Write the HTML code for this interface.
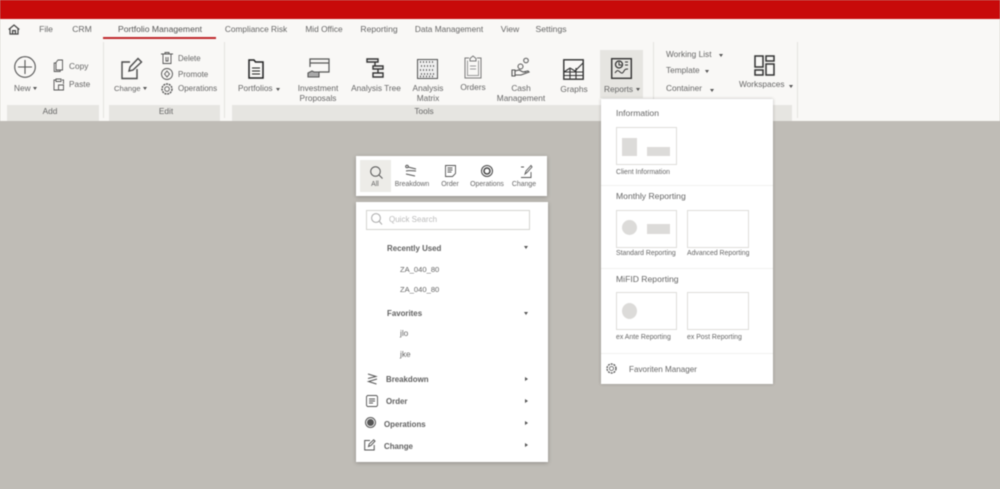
<!DOCTYPE html>
<html><head><meta charset="utf-8"><style>
html,body{margin:0;padding:0;width:1000px;height:489px;overflow:hidden;background:#bfbcb6}
#r{position:relative;width:1000px;height:489px;overflow:hidden;font-family:"Liberation Sans",sans-serif;color:#666;filter:blur(.45px)}
#r div,#r span.t{position:absolute}
.t{position:absolute;white-space:nowrap;font-size:8.3px;line-height:11px}
.n{font-size:8.6px}
.s{font-size:6.9px !important}
.c{transform:translateX(-50%);text-align:center}
.b{font-weight:bold;color:#606060;font-size:7.9px}
.tri{position:absolute;width:0;height:0;border-left:2.5px solid transparent;border-right:2.5px solid transparent;border-top:3px solid #555}
.trr{position:absolute;width:0;height:0;border-top:2.5px solid transparent;border-bottom:2.5px solid transparent;border-left:3px solid #555}
.tile{position:absolute;width:59px;height:36px;border:1px solid #dedddA;background:#fff}
.g{position:absolute;background:#dcdbd9}
svg{position:absolute;overflow:visible;fill:none;stroke:#555;stroke-width:1}
</style></head><body><div id="r">
<div style="left:0;top:0;width:1000px;height:19px;background:#c80a0a"></div>
<div style="left:0;top:19px;width:1000px;height:102px;background:#f9f8f6"></div>

<svg style="left:8px;top:24px" width="12" height="11"><path d="M.7 5.500 6 1l5.300 4.500M2 4.600V10h8V4.600M4.600 10V6.600h2.800V10" stroke="#444" stroke-width="1.200"/></svg>
<span class="t c n" style="left:46px;top:24px">File</span>
<span class="t c n" style="left:82px;top:24px">CRM</span>
<span class="t c n" style="left:160px;top:24px;color:#555">Portfolio Management</span>
<div style="left:103px;top:37px;width:113px;height:2px;background:#c0282c"></div>
<span class="t c" style="left:256px;top:24px">Compliance Risk</span>
<span class="t c" style="left:324px;top:24px">Mid Office</span>
<span class="t c n" style="left:379px;top:24px">Reporting</span>
<span class="t c" style="left:449px;top:24px">Data Management</span>
<span class="t c n" style="left:510px;top:24px">View</span>
<span class="t c n" style="left:551px;top:24px">Settings</span>

<div style="left:103px;top:42px;width:1px;height:76px;background:#e4e3df"></div>
<div style="left:224px;top:42px;width:1px;height:76px;background:#e4e3df"></div>
<div style="left:653px;top:42px;width:1px;height:76px;background:#e4e3df"></div>
<div style="left:797px;top:42px;width:1px;height:76px;background:#e4e3df"></div>

<div style="left:7px;top:105px;width:92px;height:16px;background:#e6e5e1"></div>
<div style="left:109px;top:105px;width:111px;height:16px;background:#e6e5e1"></div>
<div style="left:232px;top:105px;width:560px;height:16px;background:#e6e5e1"></div>
<span class="t c" style="left:50px;top:106px">Add</span>
<span class="t c" style="left:166px;top:106px">Edit</span>
<span class="t c" style="left:424px;top:106px">Tools</span>

<svg style="left:14px;top:56px" width="22" height="22"><circle cx="11" cy="11" r="10.300" stroke="#555" stroke-width="1.100"/><path d="M11 4v14M4 11h14" stroke-width="1.100"/></svg>
<span class="t" style="left:14px;top:83px">New</span><span class="tri" style="left:33px;top:87px"></span>
<svg style="left:53px;top:59px" width="12" height="14"><path d="M3 4H1.200v8.500h6V11M3 11V3.500L5 1h4.500v10z" stroke-width=".9"/></svg>
<span class="t" style="left:69px;top:61px">Copy</span>
<svg style="left:53px;top:78px" width="12" height="14"><path d="M3 2H1v10h4M9 2h1.500v4M3 1h5v2.500H3zM5.500 7h5v5h-5z" stroke-width=".9"/></svg>
<span class="t" style="left:69px;top:79px">Paste</span>

<svg style="left:121px;top:57px" width="22" height="23"><path d="M9 5H1v16.500h15V12M8 14l1-4L17 1.500 20.500 5 12 13z" stroke="#4a4a4a" stroke-width="1.400"/></svg>
<span class="t" style="left:114px;top:83px;font-size:7.600px">Change</span><span class="tri" style="left:143px;top:87px"></span>
<svg style="left:161px;top:52px" width="12" height="12"><path d="M0 2h12M4 2V.5h4V2M2 2v9.500h8V2M5 5v4h2V5" stroke-width=".9"/></svg>
<span class="t" style="left:178px;top:53px;font-size:7.800px">Delete</span>
<svg style="left:161px;top:68px" width="12" height="12"><circle cx="6" cy="6" r="5.500" stroke-width=".9"/><path d="M6 3 8.500 6 6 9 3.500 6z" stroke-width=".9"/></svg>
<span class="t" style="left:178px;top:69px;font-size:8px">Promote</span>
<svg style="left:161px;top:83px" width="12" height="12"><circle cx="6" cy="6" r="5" stroke-width="1.400" stroke-dasharray="2 .8"/><circle cx="6" cy="6" r="2.300" stroke-width=".9"/></svg>
<span class="t" style="left:178px;top:83px;font-size:8px">Operations</span>

<svg style="left:248px;top:59px" width="16" height="20"><path d="M1 1h5l1.500 2H15v16H1z" stroke="#222" stroke-width="1.500"/><path d="M4 9h8M4 12h8M4 15h8" stroke="#222" stroke-width="1.100"/></svg>
<span class="t" style="left:238px;top:83px">Portfolios</span><span class="tri" style="left:276px;top:88px"></span>
<svg style="left:307px;top:58px" width="23" height="21"><path d="M3 9V1h19v13H12M3 5h19" stroke-width="1.200"/><path d="M1 15l4-2 2 1h5v5H1z" fill="#aaa" stroke-width="1.100"/></svg>
<span class="t c" style="left:318px;top:84px;line-height:9.500px">Investment<br>Proposals</span>
<svg style="left:366px;top:58px" width="22" height="21"><path d="M1 1h11v3H1zM7 8h10v3H7zM7 15h10v4H7zM9 4v4M12 11v4" stroke="#333" stroke-width="1.400"/></svg>
<span class="t c" style="left:376px;top:83px">Analysis Tree</span>
<svg style="left:417px;top:59px" width="21" height="20"><rect x=".5" y=".5" width="20" height="19" fill="#eee" stroke="#555"/><path d="M3 3h15M4 7h13M3 11h15M4 15h13M3 17.500h15" stroke="#444" stroke-width="1.600" stroke-dasharray="1 2"/></svg>
<span class="t c" style="left:428px;top:84px;line-height:9.500px">Analysis<br>Matrix</span>
<svg style="left:464px;top:55px" width="18" height="24"><path d="M5 3H1v20h16V3h-4" stroke="#777"/><path d="M6 6V3.500L9 1l3 2.500V6z" stroke="#777"/><path d="M3.500 5.500v15h11v-15M6 11h6M6 14h6" stroke="#999"/></svg>
<span class="t c" style="left:473px;top:82px">Orders</span>
<svg style="left:511px;top:57px" width="20" height="22"><circle cx="15" cy="3.500" r="2.300"/><circle cx="9.500" cy="9.500" r="2.500"/><path d="M1 13h3v6H1zM4 14l4-1 4 2h3M4 18h6l8-3-1-1-5 1" stroke-width="1.100"/></svg>
<span class="t c" style="left:521px;top:84px;line-height:9.500px">Cash<br>Management</span>
<svg style="left:563px;top:59px" width="21" height="21"><rect x=".8" y=".8" width="19.400" height="19.400" stroke="#333" stroke-width="1.400"/><path d="M1 13h19M1 16.500h19M7 10v10M13 9v11M1 13l6-4 5 3 8-8" stroke="#333" stroke-width="1.100"/></svg>
<span class="t c" style="left:574px;top:84px">Graphs</span>

<div style="left:600px;top:50px;width:43px;height:48px;background:#e6e5e1"></div>
<svg style="left:611px;top:58px" width="21" height="21"><rect x=".7" y=".7" width="19.600" height="19.600" stroke="#333" stroke-width="1.400"/><circle cx="8" cy="6.500" r="3.500" stroke="#333" stroke-width="1.300"/><path d="M8 4v3h2.500M14 4h3M14 7h3M4 15c2-3 3-3 5-1s3 1 4-1 2-2 4-2" stroke="#333"/></svg>
<span class="t" style="left:604px;top:84px">Reports</span><span class="tri" style="left:636px;top:88px"></span>

<span class="t" style="left:666px;top:49px">Working List</span><span class="tri" style="left:719px;top:54px"></span>
<span class="t" style="left:666px;top:65px">Template</span><span class="tri" style="left:705px;top:70px"></span>
<span class="t" style="left:666px;top:83px">Container</span><span class="tri" style="left:710px;top:89px"></span>
<svg style="left:754px;top:55px" width="21" height="21"><path d="M1 1h8v11H1zM12 1h8v5h-8zM1 15h8v5H1zM12 9h8v11h-8z" stroke="#333" stroke-width="1.500"/></svg>
<span class="t" style="left:739px;top:79px">Workspaces</span><span class="tri" style="left:789px;top:85px"></span>

<!-- Reports dropdown -->
<div style="left:601px;top:99px;width:172px;height:285px;background:#fff;box-shadow:0 0 3px rgba(0,0,0,.25)"></div>
<span class="t n" style="left:616px;top:108px">Information</span>
<div class="tile" style="left:616px;top:127px"><div class="g" style="left:5px;top:10px;width:15px;height:18px"></div><div class="g" style="left:30px;top:19px;width:23px;height:9px"></div></div>
<span class="t s" style="left:616px;top:167px">Client Information</span>
<div style="left:601px;top:185px;width:172px;height:1px;background:#f2f1ef"></div>
<span class="t n" style="left:616px;top:191px">Monthly Reporting</span>
<div class="tile" style="left:616px;top:210px"><div class="g" style="left:5px;top:9px;width:15px;height:15px;border-radius:50%"></div><div class="g" style="left:30px;top:13px;width:23px;height:10px"></div></div>
<div class="tile" style="left:687px;top:210px;width:60px"></div>
<span class="t s" style="left:616px;top:248px">Standard Reporting</span>
<span class="t s" style="left:687px;top:248px">Advanced Reporting</span>
<div style="left:601px;top:268px;width:172px;height:1px;background:#f2f1ef"></div>
<span class="t n" style="left:616px;top:274px">MiFID Reporting</span>
<div class="tile" style="left:616px;top:292px"><div class="g" style="left:5px;top:10px;width:15px;height:16px;border-radius:50%"></div></div>
<div class="tile" style="left:687px;top:292px;width:60px"></div>
<span class="t s" style="left:616px;top:332px">ex Ante Reporting</span>
<span class="t s" style="left:687px;top:332px">ex Post Reporting</span>
<div style="left:601px;top:353px;width:172px;height:1px;background:#f2f1ef"></div>
<svg style="left:606px;top:363px" width="11" height="11"><circle cx="5.500" cy="5.500" r="4.500" stroke-width="1.300" stroke-dasharray="2 .9"/><circle cx="5.500" cy="5.500" r="2" stroke-width=".8"/></svg>
<span class="t" style="left:629px;top:364px;font-size:8.100px">Favoriten Manager</span>

<!-- Search tabs -->
<div style="left:356px;top:156px;width:191px;height:40px;background:#fff;box-shadow:0 1px 4px rgba(0,0,0,.25)"></div>
<div style="left:360px;top:160px;width:31px;height:32px;background:#edece8"></div>
<svg style="left:370px;top:166px" width="13" height="13"><circle cx="5.500" cy="5.500" r="4.800"/><path d="M9 9l3.500 3.500"/></svg>
<span class="t c s" style="left:375px;top:179px">All</span>
<svg style="left:405px;top:165px" width="12" height="12"><circle cx="2" cy="1.500" r="1.300"/><path d="M3 2l8 2M1 6c3-1 7 0 10 0M1 9l9 2" stroke-width="1"/></svg>
<span class="t c s" style="left:412px;top:179px">Breakdown</span>
<svg style="left:445px;top:165px" width="11" height="12"><path d="M.5.500h10v8l-3 3h-7zM2.500 3h5M2.500 5h5M2.500 7h4" stroke-width=".9"/></svg>
<span class="t c s" style="left:450px;top:179px">Order</span>
<svg style="left:481px;top:165px" width="12" height="12"><circle cx="6" cy="6" r="5.500" stroke="#444"/><circle cx="6" cy="6" r="3" stroke="#444" stroke-width="1.500"/></svg>
<span class="t c s" style="left:487px;top:179px">Operations</span>
<svg style="left:520px;top:165px" width="12" height="13"><path d="M1 2h3M1 12.500h10V7M5 9l1-3 5-5.500 1 1.500-5 5.500z" stroke-width=".9"/></svg>
<span class="t c s" style="left:524px;top:179px">Change</span>

<!-- Search panel -->
<div style="left:356px;top:202px;width:192px;height:260px;background:#fff;box-shadow:0 1px 4px rgba(0,0,0,.25)"></div>
<div style="left:366px;top:210px;width:162px;height:18px;border:1px solid #d5d4d0;background:#fff"></div>
<svg style="left:371px;top:213px" width="11" height="12"><circle cx="5" cy="5" r="4.400" stroke="#aaa"/><path d="M8 8l3 3.500" stroke="#aaa"/></svg>
<span class="t" style="left:389px;top:214px;color:#bbb;font-size:8px">Quick Search</span>
<span class="t b" style="left:387px;top:243px">Recently Used</span><span class="tri" style="left:524px;top:246px"></span>
<span class="t" style="left:400px;top:264px;font-size:7.600px">ZA_040_80</span>
<span class="t" style="left:400px;top:284px;font-size:7.600px">ZA_040_80</span>
<span class="t b" style="left:387px;top:308px">Favorites</span><span class="tri" style="left:524px;top:312px"></span>
<span class="t" style="left:400px;top:328px">jlo</span>
<span class="t" style="left:400px;top:349px">jke</span>
<svg style="left:367px;top:373px" width="11" height="12"><path d="M1 1l8 2.500-8 2M10 6 1.500 8.500l8 2.500" stroke-width="1"/></svg>
<span class="t b" style="left:386px;top:374px">Breakdown</span><span class="trr" style="left:525px;top:377px"></span>
<svg style="left:366px;top:395px" width="12" height="12"><path d="M1.500.500h9l1 1v9l-1 1h-9l-1-1v-9zM3 4h6M3 6h6M3 8h4" stroke-width=".9"/></svg>
<span class="t b" style="left:386px;top:396px">Order</span><span class="trr" style="left:525px;top:399px"></span>
<svg style="left:365px;top:417px" width="12" height="12"><circle cx="5.500" cy="5.500" r="5"/><circle cx="5.500" cy="5.500" r="3" fill="#555"/></svg>
<span class="t b" style="left:384px;top:419px">Operations</span><span class="trr" style="left:525px;top:421px"></span>
<svg style="left:364px;top:439px" width="12" height="12"><path d="M6 1.500H.7v9.500h9.500V6M4.500 7.500l.7-2.500L9.700.8l1.300 1.300L7 6.500z" stroke-width="1"/></svg>
<span class="t b" style="left:384px;top:441px">Change</span><span class="trr" style="left:525px;top:443px"></span>
</div></body></html>
